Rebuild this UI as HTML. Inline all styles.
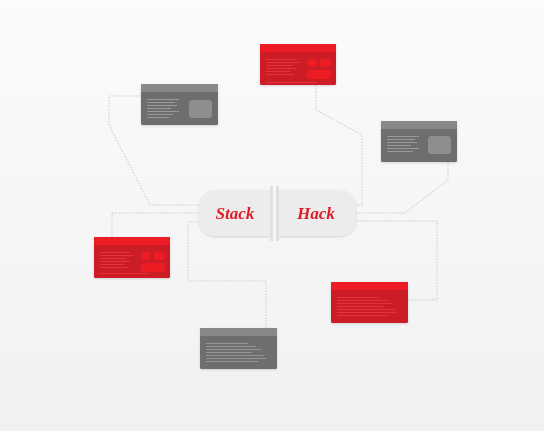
<!DOCTYPE html>
<html><head><style>
html,body{margin:0;padding:0;}
body{width:544px;height:431px;overflow:hidden;background:linear-gradient(#fbfbfb,#f1f1f1);}
</style></head><body>
<svg width="544" height="431" viewBox="0 0 544 431" xmlns="http://www.w3.org/2000/svg" style="position:absolute;left:0;top:0">
<defs>
<filter id="sh" x="-10%" y="-10%" width="120%" height="130%"><feDropShadow dx="0" dy="1" stdDeviation="1" flood-opacity="0.15"/></filter>
</defs>
<g fill="none" stroke="#c9c9c9" stroke-width="1" stroke-dasharray="1.5 1.5">
<path d="M141 96 H109 V125 L150 205 H202"/>
<path d="M316 85 V110 L362 135 V205 H354"/>
<path d="M448 162 V180 L405 213 H354"/>
<path d="M112 237 V213 H202"/>
<path d="M266 328 V281 H188 V222 H202"/>
<path d="M408 300 H437 V221 H354"/>
</g>
<!-- pill -->
<g filter="url(#sh)">
<path d="M215 190 H270 V236 H215 A16 16 0 0 1 199 220 V206 A16 16 0 0 1 215 190Z" fill="#ececec"/>
<path d="M278 190 H340 A16 16 0 0 1 356 206 V220 A16 16 0 0 1 340 236 H278Z" fill="#ececec"/>
</g>
<rect x="270" y="186" width="3" height="55" fill="#e0e0e0"/>
<rect x="276" y="186" width="3" height="55" fill="#e0e0e0"/>
<text x="235" y="219" text-anchor="middle" font-family="Liberation Serif, serif" font-style="italic" font-weight="bold" font-size="17" fill="#e01b24">Stack</text>
<text x="316" y="219" text-anchor="middle" font-family="Liberation Serif, serif" font-style="italic" font-weight="bold" font-size="17" fill="#e01b24">Hack</text>
<!-- gray card 1 -->
<g filter="url(#sh)"><rect x="141" y="84" width="77" height="41" rx="1.5" fill="#6e6e6e"/></g>
<rect x="141" y="84" width="77" height="8" fill="#888"/>
<g fill="#9a9a9a"><rect x="147" y="99" width="32" height="1"/><rect x="147" y="102" width="28" height="1"/><rect x="147" y="105" width="30" height="1"/><rect x="147" y="108" width="24" height="1"/><rect x="147" y="111" width="32" height="1"/><rect x="147" y="114" width="26" height="1"/><rect x="147" y="117" width="22" height="1"/></g>
<rect x="189" y="100" width="23" height="18" rx="3" fill="#8e8e8e"/>
<!-- gray card right -->
<g filter="url(#sh)"><rect x="381" y="121" width="76" height="41" rx="1.5" fill="#6e6e6e"/></g>
<rect x="381" y="121" width="76" height="8" fill="#888"/>
<g fill="#9a9a9a"><rect x="387" y="136" width="32" height="1"/><rect x="387" y="139" width="28" height="1"/><rect x="387" y="142" width="30" height="1"/><rect x="387" y="145" width="24" height="1"/><rect x="387" y="148" width="32" height="1"/><rect x="387" y="151" width="26" height="1"/></g>
<rect x="428" y="136" width="23" height="18" rx="3" fill="#8e8e8e"/>
<!-- gray bottom -->
<g filter="url(#sh)"><rect x="200" y="328" width="77" height="41" rx="1.5" fill="#6e6e6e"/></g>
<rect x="200" y="328" width="77" height="8" fill="#888"/>
<g fill="#959595"><rect x="206" y="343" width="42" height="1"/><rect x="206" y="346" width="50" height="1"/><rect x="206" y="349" width="55" height="1"/><rect x="206" y="352" width="46" height="1"/><rect x="206" y="355" width="58" height="1"/><rect x="206" y="358" width="60" height="1"/><rect x="206" y="361" width="52" height="1"/></g>
<!-- red top -->
<g filter="url(#sh)"><rect x="260" y="44" width="76" height="41" rx="1.5" fill="#cc1b27"/></g>
<rect x="260" y="44" width="76" height="8" fill="#ed1c24"/>
<g fill="#e8323b"><rect x="266" y="59" width="30" height="1"/><rect x="266" y="62" width="34" height="1"/><rect x="266" y="65" width="26" height="1"/><rect x="266" y="68" width="30" height="1"/><rect x="266" y="71" width="24" height="1"/><rect x="266" y="74" width="28" height="1"/><rect x="266" y="82" width="50" height="1"/></g>
<g fill="#ed1c24"><rect x="307" y="59" width="10" height="8" rx="3"/><rect x="320" y="59" width="11" height="8" rx="3"/><rect x="307" y="70" width="24" height="9" rx="3"/></g>
<!-- red left -->
<g filter="url(#sh)"><rect x="94" y="237" width="76" height="41" rx="1.5" fill="#cc1b27"/></g>
<rect x="94" y="237" width="76" height="8" fill="#ed1c24"/>
<g fill="#e8323b"><rect x="100" y="252" width="30" height="1"/><rect x="100" y="255" width="34" height="1"/><rect x="100" y="258" width="26" height="1"/><rect x="100" y="261" width="30" height="1"/><rect x="100" y="264" width="24" height="1"/><rect x="100" y="267" width="28" height="1"/><rect x="100" y="273" width="48" height="1"/></g>
<g fill="#ed1c24"><rect x="141" y="252" width="10" height="8" rx="3"/><rect x="154" y="252" width="11" height="8" rx="3"/><rect x="141" y="263" width="24" height="9" rx="3"/></g>
<!-- red right -->
<g filter="url(#sh)"><rect x="331" y="282" width="77" height="41" rx="1.5" fill="#cc1b27"/></g>
<rect x="331" y="282" width="77" height="8" fill="#ed1c24"/>
<g fill="#e8323b"><rect x="337" y="297" width="42" height="1"/><rect x="337" y="300" width="50" height="1"/><rect x="337" y="303" width="56" height="1"/><rect x="337" y="306" width="46" height="1"/><rect x="337" y="309" width="58" height="1"/><rect x="337" y="312" width="60" height="1"/><rect x="337" y="315" width="52" height="1"/></g>
</svg>
</body></html>
